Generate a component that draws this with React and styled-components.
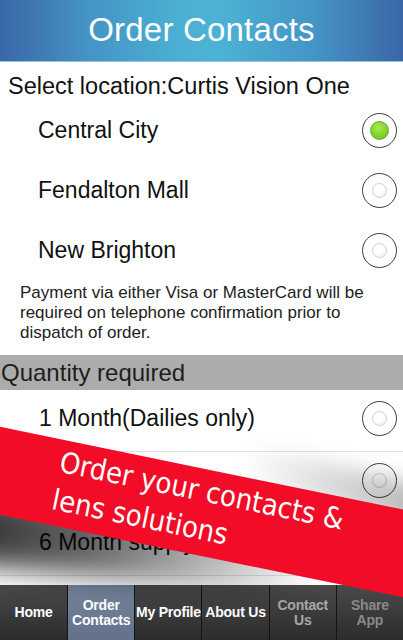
import styled, { createGlobalStyle } from "styled-components"

const GlobalStyle = createGlobalStyle`
  html, body {
    margin: 0;
    padding: 0;
    background: #fff;
  }
  * {
    box-sizing: border-box;
  }
`

const locations = [
  { name: 'Central City', selected: true },
  { name: 'Fendalton Mall' },
  { name: 'New Brighton' }
]

const quantities = [
  { name: '1 Month(Dailies only)' },
  { name: '3 Month supply' },
  { name: '6 Month supply' }
]

const tabs = [
  { label: ['Home'] },
  { label: ['Order', 'Contacts'], active: true },
  { label: ['My Profile'] },
  { label: ['About Us'] },
  { label: ['Contact', 'Us'], dim: '#a8a8a8' },
  { label: ['Share', 'App'], dim: '#8a8a8a' }
]

const Radio = ({ selected }) => (
  <RadioRing>
    {selected ? <GreenDot /> : <EmptyDot />}
  </RadioRing>
)

const App = () => {
  return (
    <Screen>
      <GlobalStyle />
      <Header>Order Contacts</Header>
      <Content>
        <SelectLabel>Select location:Curtis Vision One</SelectLabel>
        {locations.map((loc) => (
          <LocationRow key={loc.name}>
            <span>{loc.name}</span>
            <Radio selected={loc.selected} />
          </LocationRow>
        ))}
        <Note>
          Payment via either Visa or MasterCard will be required on telephone confirmation prior to dispatch of order.
        </Note>
        <SectionBar>Quantity required</SectionBar>
        {quantities.map((q) => (
          <QuantityRow key={q.name}>
            <span>{q.name}</span>
            <Radio />
          </QuantityRow>
        ))}
      </Content>
      <TabBar>
        {tabs.map((tab) => (
          <Tab key={tab.label.join(' ')} $active={tab.active} $color={tab.dim}>
            {tab.label.map((line) => <span key={line}>{line}</span>)}
          </Tab>
        ))}
      </TabBar>
      <ShadowBelow />
      <ShadowAbove />
      <Banner>
        <span>Order your contacts &amp;</span>
        <span>lens solutions</span>
      </Banner>
    </Screen>
  )
}

const Screen = styled.div`
  position: relative;
  width: 403px;
  height: 640px;
  overflow: hidden;
  display: flex;
  flex-direction: column;
  background: #fff;
  font-family: "Liberation Sans", Arial, sans-serif;
  color: #111;
`

const Header = styled.header`
  height: 62px;
  flex-shrink: 0;
  display: flex;
  justify-content: center;
  align-items: center;
  padding-bottom: 2px;
  background: linear-gradient(90deg, #3a66a7 0%, #4594c6 22%, #4bb0d3 45%, #4cb2d4 55%, #4594c6 78%, #3a66a7 100%);
  border-bottom: 1px solid #8fc6dc;
  color: #fff;
  font-size: 33px;
  letter-spacing: 0.2px;
`

const Content = styled.main`
  flex: 1;
  overflow: hidden;
`

const SelectLabel = styled.h1`
  margin: 0;
  padding: 10px 0 0 8px;
  height: 38px;
  font-size: 23.5px;
  font-weight: normal;
  line-height: 28px;
  color: #111;
`

const LocationRow = styled.div`
  height: 60px;
  display: flex;
  align-items: center;
  justify-content: space-between;
  padding: 0 6px 0 38px;
  font-size: 23px;
`

const QuantityRow = styled(LocationRow)`
  height: 62px;
  padding-left: 39px;
  border-bottom: 1px solid #e2e2e2;
  padding-bottom: 4px;
`

const RadioRing = styled.span`
  width: 35px;
  height: 35px;
  border-radius: 50%;
  border: 1.5px solid #3c3c3c;
  background: #fff;
  display: flex;
  justify-content: center;
  align-items: center;
`

const EmptyDot = styled.span`
  width: 15px;
  height: 15px;
  border-radius: 50%;
  border: 1px solid #cfcfcf;
  background: radial-gradient(circle at 40% 35%, #fff 40%, #eee 100%);
`

const GreenDot = styled.span`
  width: 19px;
  height: 19px;
  border-radius: 50%;
  border: 1px solid #6aa83a;
  background: radial-gradient(circle at 45% 35%, #a6ec55 0%, #80d22c 55%, #6bb81f 100%);
`

const Note = styled.p`
  margin: 0;
  padding: 3px 12px 12px 20px;
  font-size: 17px;
  line-height: 20px;
  color: #222;
`

const SectionBar = styled.h2`
  margin: 0;
  height: 35px;
  background: #acacac;
  font-size: 24px;
  font-weight: normal;
  line-height: 35px;
  padding-left: 1px;
  color: #1e1e1e;
`

const TabBar = styled.nav`
  height: 55px;
  flex-shrink: 0;
  display: grid;
  grid-template-columns: repeat(6, 1fr);
  background: linear-gradient(#4a4a4a, #2c2c2c);
`

const Tab = styled.div`
  display: flex;
  flex-direction: column;
  justify-content: center;
  align-items: center;
  border-left: 1px solid #141414;
  background: ${({ $active }) => $active ? 'linear-gradient(#74849b, #63728a)' : 'transparent'};
  color: ${({ $color }) => $color || '#fff'};
  font-size: 14px;
  font-weight: bold;
  line-height: 15px;
  white-space: nowrap;
  letter-spacing: -0.2px;

  &:first-child {
    border-left: none;
  }
`

const Banner = styled.div`
  position: absolute;
  left: -79px;
  top: 469px;
  width: 560px;
  height: 86px;
  transform: rotate(11.6deg);
  background: #f20c28;
  display: flex;
  flex-direction: column;
  padding: 3px 0 0 132px;
  color: #fff;
  font-family: "DejaVu Sans Condensed", "DejaVu Sans", sans-serif;
  font-size: 29px;
  line-height: 38px;
  white-space: nowrap;
  z-index: 3;
`

const ShadowBelow = styled.div`
  position: absolute;
  left: -60px;
  top: 508px;
  width: 380px;
  height: 72px;
  transform: rotate(6deg);
  background: linear-gradient(90deg, rgba(0,0,0,0.85) 0%, rgba(0,0,0,0.6) 40%, rgba(0,0,0,0) 100%);
  filter: blur(14px);
  z-index: 2;
`

const ShadowAbove = styled.div`
  position: absolute;
  left: 240px;
  top: 468px;
  width: 220px;
  height: 40px;
  transform: rotate(14deg);
  background: linear-gradient(90deg, rgba(0,0,0,0) 0%, rgba(0,0,0,0.35) 100%);
  filter: blur(10px);
  z-index: 2;
`

export default App
